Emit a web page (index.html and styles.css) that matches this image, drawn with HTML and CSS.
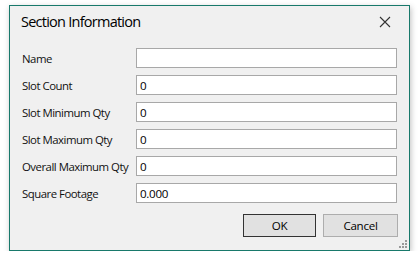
FILE: index.html
```html
<!DOCTYPE html>
<html>
<head>
<meta charset="utf-8">
<link rel="stylesheet" href="styles.css">
</head>
<body>
<div class="window">
  <div class="titlebar">
    <span class="title">Section Information</span>
    <svg class="close" width="12" height="12" viewBox="0 0 12 12"><path d="M1 1 L11 11 M11 1 L1 11" stroke="#333" stroke-width="1.1" fill="none"/></svg>
  </div>
  <div class="form">
    <label class="lbl">Name</label><div class="field"></div>
    <label class="lbl">Slot Count</label><div class="field">0</div>
    <label class="lbl">Slot Minimum Qty</label><div class="field">0</div>
    <label class="lbl">Slot Maximum Qty</label><div class="field">0</div>
    <label class="lbl">Overall Maximum Qty</label><div class="field">0</div>
    <label class="lbl">Square Footage</label><div class="field">0.000</div>
  </div>
  <div class="buttons">
    <div class="btn default">OK</div>
    <div class="btn">Cancel</div>
  </div>
  <svg class="grip" width="9" height="9" viewBox="0 0 9 9">
    <rect x="6" y="0" width="2" height="2" fill="#999"/>
    <rect x="3" y="3" width="2" height="2" fill="#999"/>
    <rect x="6" y="3" width="2" height="2" fill="#999"/>
    <rect x="0" y="6" width="2" height="2" fill="#999"/>
    <rect x="3" y="6" width="2" height="2" fill="#999"/>
    <rect x="6" y="6" width="2" height="2" fill="#999"/>
  </svg>
</div>
</body>
</html>
```
FILE: styles.css
```css
html, body { margin: 0; padding: 0; background: #fff; }
body { font-family: "Open Sans", "Noto Sans", sans-serif; color: #000; }
.window {
  position: relative;
  margin: 5px 0 0 9px;
  width: 401px;
  height: 246px;
  box-sizing: border-box;
  border: 1px solid #18796b;
  background: #f0f0f0;
  box-shadow: 1px 2px 6px rgba(0,0,0,0.25);
}
.titlebar {
  height: 31px;
  display: flex;
  align-items: center;
  justify-content: space-between;
  padding: 0 18px 0 11px;
}
.title { font-size: 14.5px; letter-spacing: -0.75px; color: #000; }
.close { display: block; }
.form {
  display: grid;
  grid-template-columns: 114px 261px;
  grid-auto-rows: 20px;
  row-gap: 7px;
  padding: 11px 0 0 12px;
}
.lbl { font-size: 11.4px; letter-spacing: -0.5px; display: flex; align-items: center; white-space: nowrap; color: #111; }
.field {
  background: #fff;
  border: 1px solid #a8a8a8;
  box-sizing: border-box;
  font-size: 11.6px;
  letter-spacing: -0.3px;
  padding-left: 3px;
  display: flex;
  align-items: center;
}
.buttons {
  display: flex;
  justify-content: flex-end;
  gap: 7px;
  padding: 11px 11px 0 0;
}
.btn {
  width: 75px;
  height: 23px;
  box-sizing: border-box;
  border: 1px solid #adadad;
  background: #e1e1e1;
  font-size: 11.6px;
  letter-spacing: -0.3px;
  display: flex;
  align-items: center;
  justify-content: center;
}
.btn.default { width: 73px; border-color: #333; }
.grip { position: absolute; right: 1px; bottom: 1px; }
```
